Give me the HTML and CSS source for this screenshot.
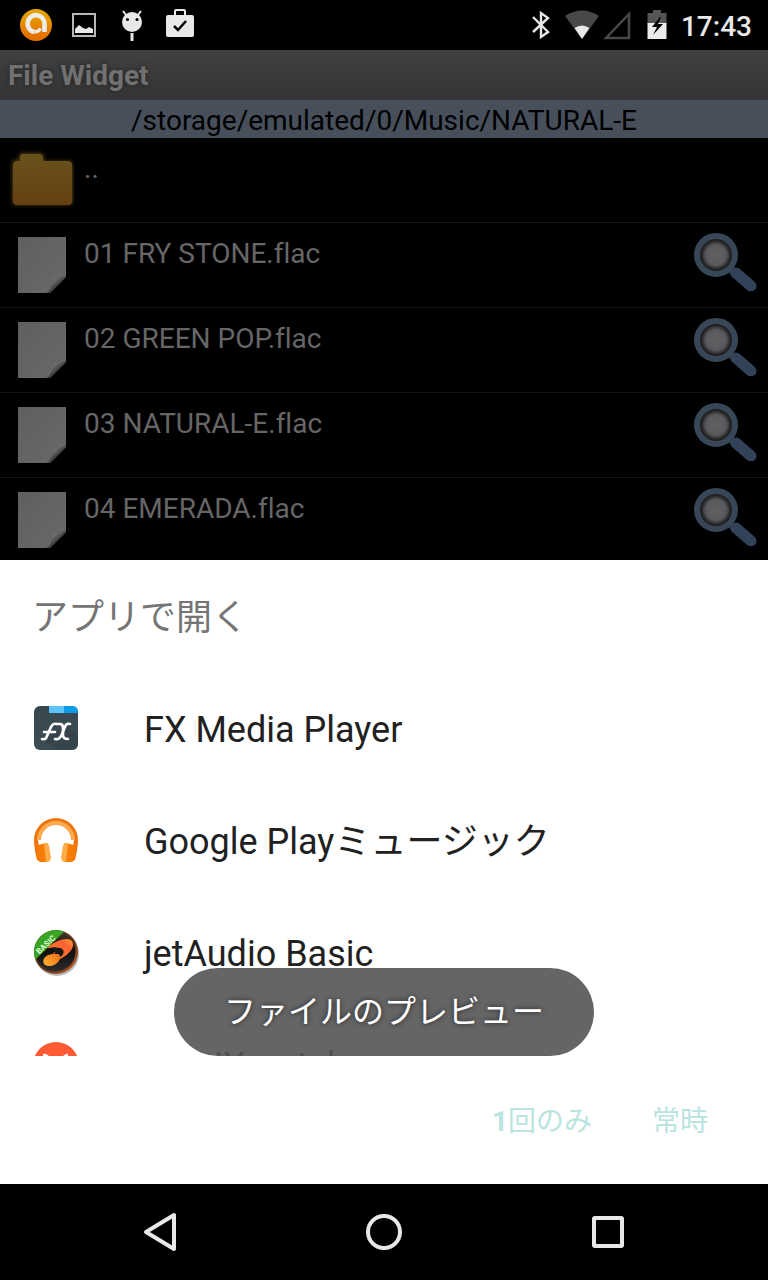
FILE: index.html
```html
<!DOCTYPE html>
<html lang="ja">
<head>
<meta charset="utf-8">
<meta name="viewport" content="width=device-width, initial-scale=1">
<title>File Widget</title>
<link rel="stylesheet" href="styles.css">
</head>
<body>
<svg class="defs" width="0" height="0" aria-hidden="true">
  <defs>
    <linearGradient id="avast" x1="0" y1="0" x2="0" y2="1"><stop offset="0" stop-color="#e6a800"/><stop offset="1" stop-color="#e66a00"/></linearGradient>
    <linearGradient id="folder" x1="0" y1="0" x2="0" y2="1"><stop offset="0" stop-color="#68521c"/><stop offset="1" stop-color="#664012"/></linearGradient>
    <linearGradient id="paper" x1="0" y1="0" x2="1" y2="1"><stop offset="0" stop-color="#5f5f5f"/><stop offset="1" stop-color="#696969"/></linearGradient>
    <linearGradient id="fold" x1="0" y1="0" x2="1" y2="1"><stop offset="0" stop-color="#505050"/><stop offset=".35" stop-color="#707070"/><stop offset=".6" stop-color="#383838"/></linearGradient>
    <radialGradient id="lens"><stop offset="0" stop-color="#616161"/><stop offset=".6" stop-color="#58595c"/><stop offset=".85" stop-color="#242424"/><stop offset="1" stop-color="#151719"/></radialGradient>
    <linearGradient id="fxbg" x1="0" y1="0" x2="0" y2="1"><stop offset="0" stop-color="#37474f"/><stop offset="1" stop-color="#3d4c55"/></linearGradient>
    <linearGradient id="jet" x1="0" y1="1" x2="1" y2="0"><stop offset="0" stop-color="#ffb52e"/><stop offset=".4" stop-color="#f47a20"/><stop offset=".75" stop-color="#ff6038"/><stop offset="1" stop-color="#ff9a20"/></linearGradient>
    <linearGradient id="disc" x1="0" y1="0" x2="0" y2="1"><stop offset="0" stop-color="#40362c"/><stop offset=".5" stop-color="#101010"/><stop offset="1" stop-color="#2c2c2c"/></linearGradient>
    <linearGradient id="rim" x1="0" y1="0" x2="1" y2="1"><stop offset="0" stop-color="#3c2a1c"/><stop offset=".6" stop-color="#6b3518"/><stop offset="1" stop-color="#d06828"/></linearGradient>
    <clipPath id="jetclip"><circle cx="22" cy="22" r="22"/></clipPath>
    <filter id="glow" x="-20%" y="-20%" width="140%" height="140%"><feGaussianBlur stdDeviation="2"/></filter>
    <filter id="soft"><feGaussianBlur stdDeviation=".5"/></filter>
    <symbol id="i-file" viewBox="0 0 64 64">
      <path d="M8 4h48v40L40 60H8z" fill="url(#paper)"/>
      <path d="M56 42v2L40 60h-4c6-3 5-9 7-13 1-3 8-1 13-5z" fill="url(#fold)" filter="url(#soft)"/>
    </symbol>
    <symbol id="i-lens" viewBox="0 0 64 64">
      <g filter="url(#soft)">
        <path d="M35 36l8 7" stroke="#27343f" stroke-width="6"/>
        <path d="M42 40l15 13" stroke="#304258" stroke-width="11" stroke-linecap="round"/>
        <circle cx="22" cy="22" r="17" fill="url(#lens)"/>
        <circle cx="22" cy="22" r="19" fill="none" stroke="#384758" stroke-width="6"/>
      </g>
    </symbol>
  </defs>
</svg>
<div class="screen">
  <header class="status">
    <div class="notices">
      <svg viewBox="0 0 48 50" role="img" aria-label="avast"><circle cx="24" cy="25" r="16" fill="url(#avast)"/><path d="M22.500 32a8.500 8.500 0 1 1 10-7.500V32" fill="none" stroke="#ececec" stroke-width="4.600"/><path d="M22.500 32q4 0 6-3.500" fill="none" stroke="#ececec" stroke-width="3.500"/></svg>
      <svg viewBox="0 0 48 50" role="img" aria-label="画像"><path d="M13 14h22v22H13z" fill="none" stroke="#b4b9b5" stroke-width="2"/><path d="M15 33v-4l4-4 4 3 3 1 3-2 4 2v4z" fill="#e8e8e8"/></svg>
      <svg viewBox="0 0 48 50" role="img" aria-label="デバッグ"><circle cx="24" cy="22" r="10" fill="#e8e8e8"/><path d="M18 15l-3-4M30 15l3-4" stroke="#e8e8e8" stroke-width="2"/><path d="M24 33v8" stroke="#e8e8e8" stroke-width="3"/><circle cx="19.500" cy="19.500" r="1.500"/><circle cx="29" cy="19.500" r="1.500"/></svg>
      <svg viewBox="0 0 48 50" role="img" aria-label="ストア"><rect x="10" y="15" width="28" height="22" rx="2" fill="#e8e8e8"/><path d="M19 15v-4l1-1h8l1 1v4" fill="none" stroke="#e8e8e8" stroke-width="2"/><path d="M18 26l4 4 8-9" fill="none" stroke="#000" stroke-width="2.500"/></svg>
    </div>
    <div class="signals">
      <svg width="20" height="30" viewBox="0 0 20 30" role="img" aria-label="Bluetooth"><path d="M2 7l15 15-7 5V3l7 5L2 22" fill="none" stroke="#e8e8e8" stroke-width="2.400"/></svg>
      <svg class="wifi" width="36" height="30" viewBox="0 0 36 30" role="img" aria-label="Wi-Fi"><path d="M17 29L0 6q17-11 34 0z" fill="#484848"/><path d="M17 29L9.500 18q7.500-5 15 0z" fill="#e8e8e8"/></svg>
      <svg width="28" height="30" viewBox="0 0 28 30" role="img" aria-label="電波"><path d="M3 28L26 4v24z" fill="none" stroke="#484848" stroke-width="2.500"/></svg>
      <svg class="battery" width="20" height="30" viewBox="0 0 20 30" role="img" aria-label="充電中"><path d="M.500 3H6V0h8v3h5.500v11H.500z" fill="#555"/><path d="M.500 13h19v16H.500z" fill="#ececec"/><path d="M13 7L5 17h5l-4 8 10-11h-5l3-7z" fill="#000"/></svg>
      <time class="clock">17:43</time>
    </div>
  </header>
  <h1 class="appbar">File Widget</h1>
  <div class="path">/storage/emulated/0/Music/NATURAL-E</div>
  <ul class="files">
    <li class="file"><svg class="icon" viewBox="0 0 64 64" aria-hidden="true"><path d="M2 20v-4q0-4 4-4h3V8q0-3 3-3h18q4 0 4 4v4h24q5 0 5 4v36q0 4-4 4H7q-5 0-5-4z" fill="#493714" filter="url(#glow)"/><path d="M3 18q0-5 4-5h3V9q0-3 3-3h16q4 0 4 4v3h25q4 0 4 4v36q0 4-4 4H7q-4 0-4-4z" fill="url(#folder)"/></svg><span class="name">..</span></li>
    <li class="file"><svg class="icon" aria-hidden="true"><use href="#i-file"/></svg><span class="name">01 FRY STONE.flac</span><button class="look" aria-label="プレビュー"><svg class="icon"><use href="#i-lens"/></svg></button></li>
    <li class="file"><svg class="icon" aria-hidden="true"><use href="#i-file"/></svg><span class="name">02 GREEN POP.flac</span><button class="look" aria-label="プレビュー"><svg class="icon"><use href="#i-lens"/></svg></button></li>
    <li class="file"><svg class="icon" aria-hidden="true"><use href="#i-file"/></svg><span class="name">03 NATURAL-E.flac</span><button class="look" aria-label="プレビュー"><svg class="icon"><use href="#i-lens"/></svg></button></li>
    <li class="file"><svg class="icon" aria-hidden="true"><use href="#i-file"/></svg><span class="name">04 EMERADA.flac</span><button class="look" aria-label="プレビュー"><svg class="icon"><use href="#i-lens"/></svg></button></li>
  </ul>
  <section class="sheet">
    <h2 class="title">アプリで開く</h2>
    <div class="apps">
      <button class="app">
        <svg class="logo" viewBox="0 0 44 44" aria-hidden="true"><rect width="44" height="44" rx="6" fill="url(#fxbg)"/><path d="M34 20L44 30v8q0 6-6 6H24L9 34z" fill="#303d45" opacity=".5"/><path d="M15 0h15v7H15z" fill="#5ac4fa"/><path d="M30 0h8q6 0 6 6v1H30z" fill="#0c9be6"/><g fill="none" stroke="#fff" stroke-width="2.600" stroke-linecap="round"><path d="M8 33q4 1 5-3l4-9q2-4 6-3h3q3 0 3 4v7q0 4 5 4"/><path d="M10 26h11M36 18q-4-1-5 3l-4 9q-2 4-6 3"/></g></svg>
        <span class="label">FX Media Player</span>
      </button>
      <button class="app">
        <svg class="logo" viewBox="0 0 44 44" aria-hidden="true"><path d="M0 22a22 22 0 0 1 44 0q0 8-3 20h-4l3-20a18 18 0 0 0-36 0l3 20H3Q0 30 0 22z" fill="#ef7510"/><path d="M3 22a19 19 0 0 1 38 0h-4a15 15 0 0 0-30 0z" fill="#fcab4c"/><path d="M4 27l8-2q2 0 2 2l2 13q0 4-4 4H7q-3 0-4-4z" fill="#f57c00"/><path d="M10 26l3-1q1 0 2 3l2 11q0 5-5 5z" fill="#ffad48"/><path d="M40 27l-8-2q-2 0-2 2l-2 13q0 4 4 4h5q3 0 4-4z" fill="#f57c00"/><path d="M34 26l-3-1q-1 0-2 3l-2 11q0 5 5 5z" fill="#ffad48"/></svg>
        <span class="label">Google Playミュージック</span>
      </button>
      <button class="app">
        <svg class="logo" viewBox="0 0 44 44" aria-hidden="true"><circle cx="23" cy="24" r="22" fill="#bbb" filter="url(#soft)"/><circle cx="22" cy="22" r="22" fill="url(#rim)"/><circle cx="21.500" cy="21.500" r="20" fill="url(#disc)"/><path d="M13 18c8-7 18-11 24-8 6 6-2 15-11 19-3 7-12 9-16 5-3-6 4-10 9-10 2-3 5-4 4-6-3-1-6 0-10 0z" fill="url(#jet)"/><path d="M14 19c6-2 13-2 15 1 2 3-1 6-3 7 0-4-3-3-6-3 3-3 0-5-6-5z" fill="#181818"/><g clip-path="url(#jetclip)"><path d="M-3 34L35-3H14L-3 13z" fill="#39a522"/><text class="badge" x="4" y="25" transform="rotate(-43 4 23)">BASIC</text></g></svg>
        <span class="label">jetAudio Basic</span>
      </button>
      <button class="app">
        <svg class="logo" viewBox="0 0 44 44" aria-hidden="true"><circle cx="22" cy="23" r="23" fill="#ff5a36"/><path d="M9 34V13q0-2 3-1l6 4h8l6-4q2-1 2 1v21l-12-8z" fill="#fff"/></svg>
        <span class="label">musiXmatch</span>
      </button>
    </div>
    <footer class="actions"><button class="action" disabled><b>1</b>回のみ</button><button class="action" disabled>常時</button></footer>
    <div class="toast" role="status">ファイルのプレビュー</div>
  </section>
  <nav class="nav">
    <button aria-label="戻る"><svg viewBox="0 0 40 40"><path d="M6 20L34 3v34z"/></svg></button>
    <button aria-label="ホーム"><svg viewBox="0 0 40 40"><circle cx="20" cy="20" r="16"/></svg></button>
    <button aria-label="最近"><svg viewBox="0 0 40 40"><rect x="6" y="6" width="28" height="28" rx="1"/></svg></button>
  </nav>
</div>
</body>
</html>
```
FILE: styles.css
```css
* { box-sizing: border-box; }
body {
  margin: 0;
  background: #000;
  font-family: Roboto, "Noto Sans CJK JP", sans-serif;
  font-variant-ligatures: none;
}
button {
  border: 0;
  padding: 0;
  background: none;
  font: inherit;
  color: inherit;
}
svg { display: block; flex: none; }
.defs { position: absolute; }
.screen {
  display: flex;
  flex-direction: column;
  height: 100vh;
  min-height: 1000px;
}
.status {
  display: flex;
  flex: none;
  justify-content: space-between;
  height: 50px;
  padding: 0 16px 0 12px;
}
.notices { display: flex; }
.notices svg { width: 48px; height: 50px; }
.signals { display: flex; align-items: center; }
.wifi { margin: 0 2px 0 14px; }
.battery { margin: 0 14px 0 16px; }
.clock {
  padding-top: 4px;
  color: #e8e8e8;
  font-size: 28px;
  font-weight: 500;
  line-height: 46px;
}
.appbar {
  flex: none;
  margin: 0;
  padding: 2px 8px 0;
  background: linear-gradient(#404040, #343434);
  color: #717171;
  font-size: 28px;
  font-weight: 700;
  line-height: 48px;
  text-shadow: 0 0 4px #222;
}
.path {
  flex: none;
  padding-top: 4px;
  background: #474f5b;
  color: #000;
  font-size: 28px;
  line-height: 34px;
  text-align: center;
}
.files {
  flex: 1 1 0;
  overflow: hidden;
  margin: 0;
  padding: 0;
  list-style: none;
}
.file {
  display: flex;
  gap: 10px;
  padding: 10px;
  border-bottom: 1px solid #151515;
}
.icon { width: 64px; height: 64px; }
.name {
  flex: 1;
  color: #666;
  font-size: 28px;
  line-height: 42px;
}
.sheet {
  position: relative;
  flex: none;
  background: #fff;
}
.title {
  margin: 0;
  padding: 34px 32px 30px;
  color: #757575;
  font-size: 36px;
  font-weight: 400;
  line-height: 48px;
}
.apps { max-height: 384px; overflow: hidden; }
.app {
  display: flex;
  align-items: center;
  gap: 66px;
  width: 100%;
  height: 112px;
  padding: 0 34px;
  color: #212121;
  font-size: 36px;
  line-height: 48px;
  text-align: left;
}
.label { padding-top: 4px; }
.logo { width: 44px; height: 44px; overflow: visible; }
.badge { fill: #e0ffd8; font-size: 8px; font-weight: 700; }
.actions {
  display: flex;
  justify-content: flex-end;
  gap: 60px;
  padding: 46px 60px 42px;
}
.action {
  color: #b9e4df;
  font-size: 28px;
  line-height: 40px;
}
.toast {
  position: absolute;
  bottom: 128px;
  left: 50%;
  transform: translateX(-50%);
  padding: 20px 50px;
  border-radius: 44px;
  background: rgba(84, 84, 84, .9);
  color: #fff;
  font-size: 32px;
  line-height: 48px;
  white-space: nowrap;
  text-shadow: 0 0 5px #222;
}
.nav {
  display: flex;
  flex: none;
  justify-content: center;
  gap: 184px;
  height: 96px;
}
.nav svg {
  width: 40px;
  height: 40px;
  fill: none;
  stroke: #e8e8e8;
  stroke-width: 4;
  stroke-linejoin: round;
}
```
